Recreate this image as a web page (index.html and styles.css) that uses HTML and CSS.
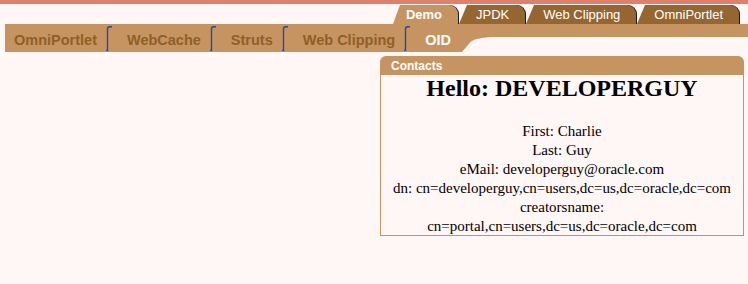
FILE: index.html
```html
<!DOCTYPE html>
<html lang="en">
<head>
<meta charset="utf-8">
<title>Portal - Demo / OID</title>
<link rel="stylesheet" href="styles.css">
</head>
<body>
<div class="topstrip"></div>
<nav class="tabrow">
  <a class="tab active">Demo</a>
  <a class="tab">JPDK</a>
  <a class="tab">Web Clipping</a>
  <a class="tab">OmniPortlet</a>
</nav>
<div class="subnav">
  <div class="subtabs">
    <a class="sublabel">OmniPortlet</a>
    <svg class="sep" width="6" height="25" viewBox="0 0 6 25"><path d="M0 24.5 H1.5 V3 Q1.5 0.8 3.8 0.8 H6" fill="none" stroke="#1f4a9e" stroke-width="1.4"/></svg>
    <a class="sublabel">WebCache</a>
    <svg class="sep" width="6" height="25" viewBox="0 0 6 25"><path d="M0 24.5 H1.5 V3 Q1.5 0.8 3.8 0.8 H6" fill="none" stroke="#1f4a9e" stroke-width="1.4"/></svg>
    <a class="sublabel">Struts</a>
    <svg class="sep" width="6" height="25" viewBox="0 0 6 25"><path d="M0 24.5 H1.5 V3 Q1.5 0.8 3.8 0.8 H6" fill="none" stroke="#1f4a9e" stroke-width="1.4"/></svg>
    <a class="sublabel">Web Clipping</a>
    <svg class="sep" width="6" height="25" viewBox="0 0 6 25"><path d="M0 24.5 H1.5 V3 Q1.5 0.8 3.8 0.8 H6" fill="none" stroke="#1f4a9e" stroke-width="1.4"/></svg>
    <a class="sublabel current">OID</a>
  </div>
  <div class="subfill"></div>
</div>
<main class="layout">
  <div class="leftcol"></div>
  <section class="portlet">
    <header class="portlet-head">Contacts</header>
    <div class="portlet-body">
      <h2 class="hello">Hello: DEVELOPERGUY</h2>
      <div class="line">First: Charlie</div>
      <div class="line">Last: Guy</div>
      <div class="line">eMail: developerguy@oracle.com</div>
      <div class="line">dn: cn=developerguy,cn=users,dc=us,dc=oracle,dc=com</div>
      <div class="line last">creatorsname: cn=portal,cn=users,dc=us,dc=oracle,dc=com</div>
    </div>
  </section>
</main>
</body>
</html>
```

FILE: styles.css
```css
html {
  background: #fff6f6;
}
body {
  margin: 0;
  background: #fff6f6;
  font-family: "Liberation Serif", "Times New Roman", serif;
  color: #000;
}
.topstrip {
  height: 4px;
  background: #df806d;
}
.tabrow {
  display: flex;
  justify-content: flex-end;
  margin-top: 1px;
  height: 19px;
  padding-right: 9px;
}
.tab {
  position: relative;
  display: flex;
  align-items: center;
  height: 19px;
  padding: 0 16px 0 17px;
  margin-left: 1px;
  background: #966631;
  color: #fff;
  font-family: "Liberation Sans", Arial, sans-serif;
  font-size: 13px;
  border-top-right-radius: 9px;
  box-shadow: 1px 0 0 #1c1c1c;
  white-space: nowrap;
}
.tab::before {
  content: "";
  position: absolute;
  left: 0;
  top: 0;
  width: 0;
  height: 0;
  border-top: 19px solid #fff6f6;
  border-right: 8px solid transparent;
}
.tab.active {
  background: #c69461;
  font-weight: bold;
  padding-left: 13px;
}
.tab.active::before {
  border-right-width: 7px;
}
.subnav {
  display: flex;
  align-items: flex-start;
  padding-left: 5px;
}
.subtabs {
  display: flex;
  align-items: center;
  height: 28px;
  width: 485px;
  padding-left: 9px;
  box-sizing: border-box;
  background: #c69461;
  clip-path: polygon(0 0, 100% 0, 100% 13px, calc(100% - 8px) 14px, calc(100% - 15px) 15.5px, calc(100% - 19px) 17.5px, calc(100% - 28px) 100%, 0 100%);
}
.subfill {
  flex: 1;
  height: 13px;
  background: #c69461;
}
.sublabel {
  font-family: "Liberation Sans", Arial, sans-serif;
  font-weight: bold;
  font-size: 14.5px;
  color: #8e6027;
  margin-right: 9px;
  padding-top: 3px;
  white-space: nowrap;
}
.sublabel.current {
  color: #fff;
}
.sep {
  align-self: flex-end;
  margin-bottom: 1px;
  margin-right: 15px;
  flex: none;
}
.layout {
  display: grid;
  grid-template-columns: 1fr 364px;
  padding: 4px 4px 0 0;
}
.portlet {
  display: flex;
  flex-direction: column;
}
.portlet-head {
  height: 19px;
  display: flex;
  align-items: center;
  padding-left: 11px;
  padding-top: 1px;
  box-sizing: border-box;
  background: #c69461;
  color: #fff;
  font-family: "Liberation Sans", Arial, sans-serif;
  font-weight: bold;
  font-size: 12px;
  border-radius: 6px 6px 0 0;
}
.portlet-body {
  border: 1px solid #c69461;
  border-top: none;
  text-align: center;
  font-size: 15px;
  line-height: 19px;
}
.hello {
  font-size: 24px;
  font-weight: bold;
  line-height: 27px;
  margin: 0 0 20px;
}
.line {
  padding: 0 4px;
}
.line.last {
  margin-bottom: -1px;
}
```
